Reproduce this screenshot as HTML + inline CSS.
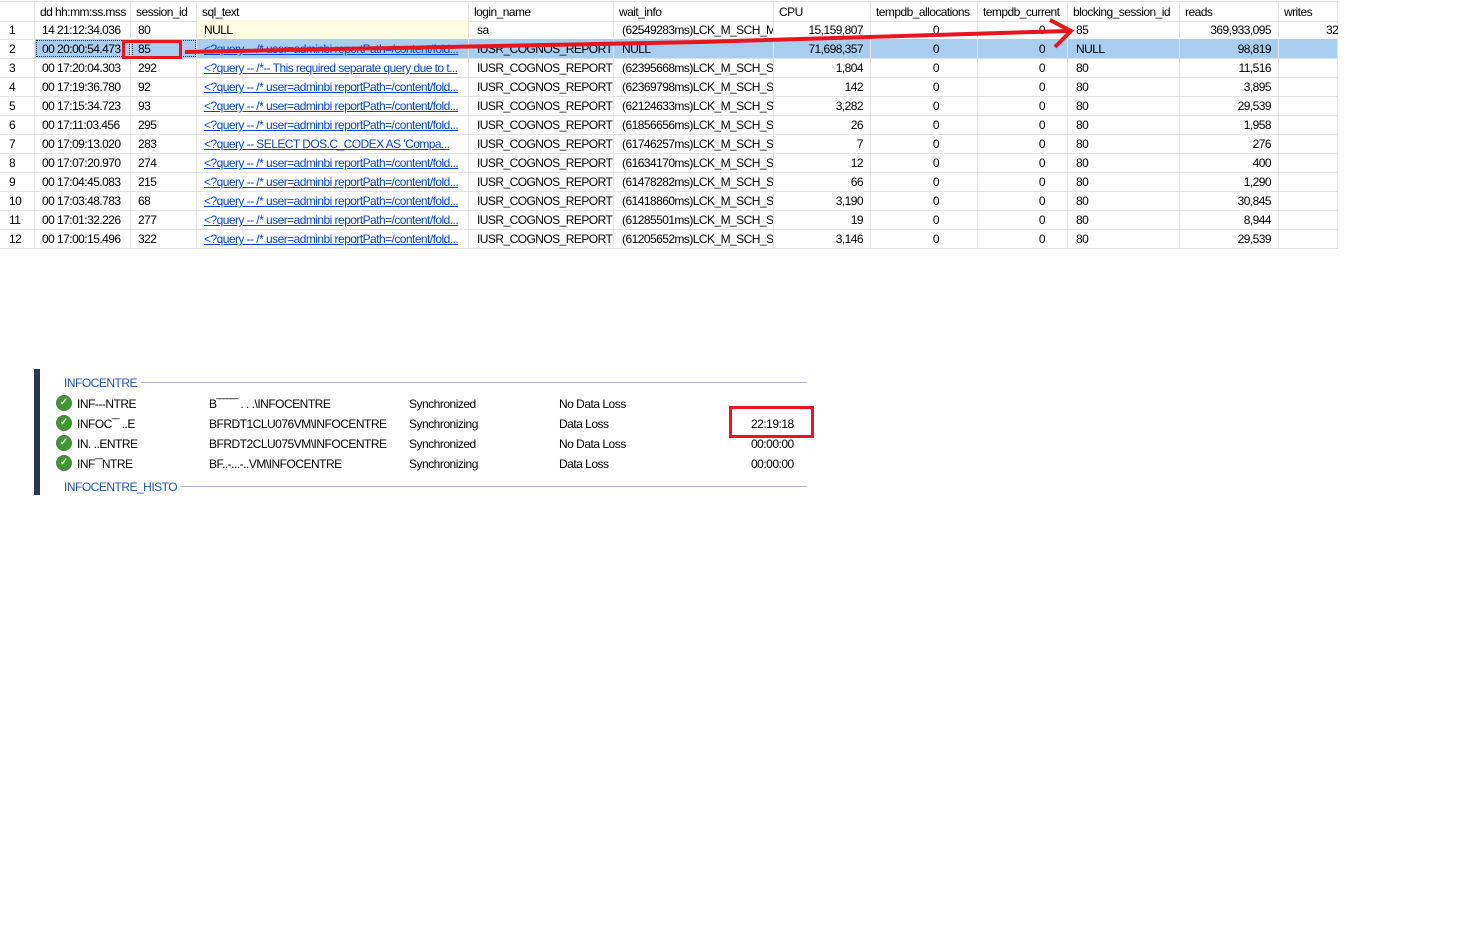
<!DOCTYPE html>
<html><head><style>
body{margin:0;width:1473px;height:950px;background:#fff;font-family:"Liberation Sans",sans-serif;font-size:12px;color:#000;position:relative;overflow:hidden}
.g{position:absolute;left:0;top:0;width:1338px}
.r{position:absolute;left:0;height:19px;width:1338px;border-bottom:1px solid #e3e3e3}
.c{position:absolute;top:0;height:19px;line-height:20px;white-space:nowrap;overflow:hidden;border-right:1px solid #e3e3e3;box-sizing:border-box;padding:0 5px;letter-spacing:-0.55px}
.rt{text-align:right;padding-right:7px}
.l{color:#0645d8;text-decoration:underline}
.b{position:absolute;font-size:12px;letter-spacing:-0.5px;white-space:nowrap}
.ck{position:absolute;width:14px;height:14px;border-radius:50%;background:#3a9a2a;border:1px solid #6a6a6a;color:#fff;font-size:10px;line-height:14px;text-align:center;font-weight:bold}
</style></head><body>
<div class="g" id="g"></div>
<script>
var cols=[[0,35],[35,131],[131,197],[197,469],[469,614],[614,774],[774,871],[871,978],[978,1068],[1068,1180],[1180,1279],[1279,1338]];
var hdr=["","dd hh:mm:ss.mss","session_id","sql_text","login_name","wait_info","CPU","tempdb_allocations","tempdb_current","blocking_session_id","reads","writes"];
var q1='&lt;?query --  /* user=adminbi reportPath=/content/fold...';
var rows=[
["1","14 21:12:34.036","80","NULL","sa","(62549283ms)LCK_M_SCH_M","15,159,807","0","0","85","369,933,095","32"],
["2","00 20:00:54.473","85",q1,"IUSR_COGNOS_REPORT","NULL","71,698,357","0","0","NULL","98,819",""],
["3","00 17:20:04.303","292","&lt;?query --  /*-- This required separate query due to t...","IUSR_COGNOS_REPORT","(62395668ms)LCK_M_SCH_S","1,804","0","0","80","11,516",""],
["4","00 17:19:36.780","92",q1,"IUSR_COGNOS_REPORT","(62369798ms)LCK_M_SCH_S","142","0","0","80","3,895",""],
["5","00 17:15:34.723","93",q1,"IUSR_COGNOS_REPORT","(62124633ms)LCK_M_SCH_S","3,282","0","0","80","29,539",""],
["6","00 17:11:03.456","295",q1,"IUSR_COGNOS_REPORT","(61856656ms)LCK_M_SCH_S","26","0","0","80","1,958",""],
["7","00 17:09:13.020","283","&lt;?query --  SELECT     DOS.C_CODEX AS 'Compa...","IUSR_COGNOS_REPORT","(61746257ms)LCK_M_SCH_S","7","0","0","80","276",""],
["8","00 17:07:20.970","274",q1,"IUSR_COGNOS_REPORT","(61634170ms)LCK_M_SCH_S","12","0","0","80","400",""],
["9","00 17:04:45.083","215",q1,"IUSR_COGNOS_REPORT","(61478282ms)LCK_M_SCH_S","66","0","0","80","1,290",""],
["10","00 17:03:48.783","68",q1,"IUSR_COGNOS_REPORT","(61418860ms)LCK_M_SCH_S","3,190","0","0","80","30,845",""],
["11","00 17:01:32.226","277",q1,"IUSR_COGNOS_REPORT","(61285501ms)LCK_M_SCH_S","19","0","0","80","8,944",""],
["12","00 17:00:15.496","322",q1,"IUSR_COGNOS_REPORT","(61205652ms)LCK_M_SCH_S","3,146","0","0","80","29,539",""]];
var h='<div class="r" style="top:1px;border-top:1px solid #e3e3e3">';
for(var i=0;i<12;i++)h+='<div class="c" style="left:'+cols[i][0]+'px;width:'+(cols[i][1]-cols[i][0])+'px">'+hdr[i]+'</div>';
h+='</div>';
rows.forEach(function(r,ri){
 var top=20+ri*19;
 h+='<div class="r" style="top:'+top+'px">';
 for(var i=0;i<12;i++){
  var cls='c',st='';
  if(i==6||i==10)cls+=' rt';
  if(i==7){st='text-align:right;padding-right:38px;';}
  if(i==8){st='text-align:right;padding-right:22px;';}
  if(i==0)st+='padding-left:9px;';
  if(i==3)st+='padding-left:7px;';
  if(i==4||i==5||i==9)st+='padding-left:8px;';
  if(i==3&&ri>0)cls+=' l';
  if(ri==1&&i>=3)st+='background:#a9cdef;';
  if(ri==1&&(i==1||i==2))st+='background:#a9cdef;outline:1px dotted #333;outline-offset:-2px;';
  if(ri==0&&i==3)st+='background:#fdfbe1;';
  if(i==11&&ri==0){st+='overflow:visible;padding-left:47px';}
  if(i>=1&&i<=2)st+='padding-left:7px;';
  var t=r[i];
  h+='<div class="'+cls+'" style="left:'+cols[i][0]+'px;width:'+(cols[i][1]-cols[i][0])+'px;'+st+'">'+(i==3&&ri>0?'<span class="l">'+t+'</span>':t)+'</div>';
 }
 h+='</div>';
});
document.getElementById('g').innerHTML=h;
</script>
<svg style="position:absolute;left:0;top:0" width="1473" height="950">
<rect x="123.5" y="41.5" width="57" height="16" fill="none" stroke="#e8141e" stroke-width="3"/>
<path d="M185 52 L700 42 L1068 31" stroke="#e8141e" stroke-width="4" fill="none"/>
<path d="M1050 20 L1071 31 L1055 47" stroke="#e8141e" stroke-width="4" fill="none"/>
<rect x="730.5" y="407.5" width="82" height="29" fill="none" stroke="#e8141e" stroke-width="3"/>
<line x1="138" y1="382.5" x2="807" y2="382.5" stroke="#a9b8d8"/>
<line x1="174" y1="486.5" x2="807" y2="486.5" stroke="#a9b8d8"/>
</svg>
<div style="position:absolute;left:34px;top:369px;width:6px;height:126px;background:#2b3552"></div>
<div class="b" style="left:64px;top:376px;color:#1b52b8;background:#fff;padding-right:4px">INFOCENTRE</div>
<div class="b" style="left:64px;top:480px;color:#1b52b8;background:#fff;padding-right:4px">INFOCENTRE_HISTO</div>
<script>
var d=[["INF&#x2010;&#x2010;&#x2010;NTRE","B&#x203e;&#x203e;&#x203e;&#x203e;&#x203e;&#x203e; . . .\\INFOCENTRE","Synchronized","No Data Loss",""],
["INFOC&#x203e;&#x203e; ..E","BFRDT1CLU076VM\\INFOCENTRE","Synchronizing","Data Loss","22:19:18"],
["IN. ..ENTRE","BFRDT2CLU075VM\\INFOCENTRE","Synchronized","No Data Loss","00:00:00"],
["INF&#x203e;&#x203e;NTRE","BF..\u2010...\u2010..VM\\INFOCENTRE","Synchronizing","Data Loss","00:00:00"]];
var s='';
d.forEach(function(r,i){var y=397+i*20;
s+='<div class="ck" style="left:56px;top:'+(y-2)+'px">&#10003;</div>';
s+='<div class="b" style="left:77px;top:'+y+'px">'+r[0]+'</div>';
s+='<div class="b" style="left:209px;top:'+y+'px">'+r[1]+'</div>';
s+='<div class="b" style="left:409px;top:'+y+'px">'+r[2]+'</div>';
s+='<div class="b" style="left:559px;top:'+y+'px">'+r[3]+'</div>';
s+='<div class="b" style="left:751px;top:'+y+'px">'+r[4]+'</div>';});
document.body.insertAdjacentHTML('beforeend',s);
</script>
</body></html>
